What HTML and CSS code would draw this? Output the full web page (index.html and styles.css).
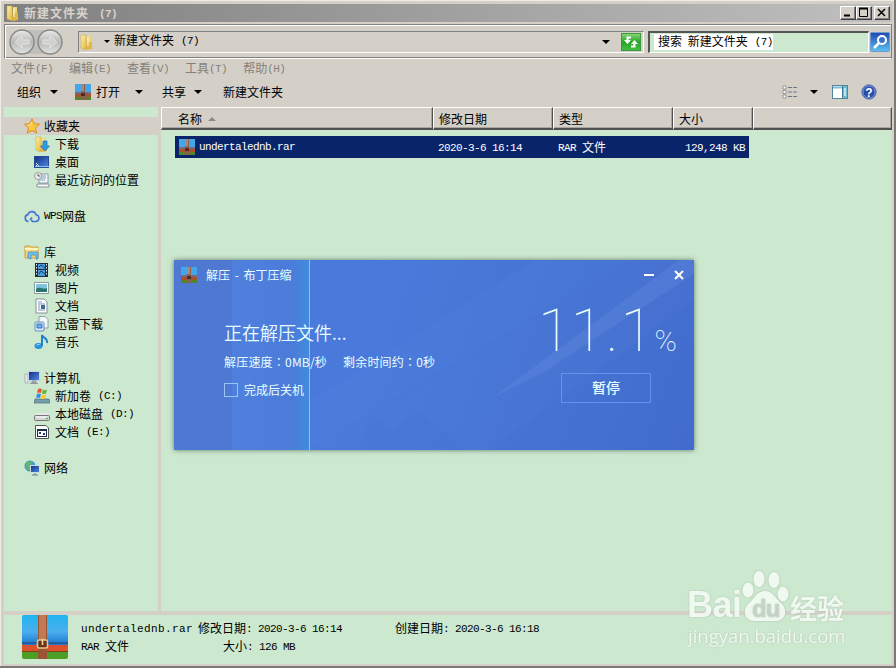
FILE: index.html
```
<!DOCTYPE html>
<html lang="zh-CN">
<head>
    <meta charset="UTF-8">
    <title>新建文件夹 (7)</title>
    <link rel="stylesheet" href="styles.css">
</head>
<body>
    <!-- shared icons -->
    <svg width="0" height="0" class="defs">
        <defs>
            <linearGradient id="gold" x1="0" y1="0" x2="1" y2="1"><stop offset="0" stop-color="#fff3a8"/><stop offset="1" stop-color="#dfae35"/></linearGradient>
            <linearGradient id="sky" x1="0" y1="0" x2="0" y2="1"><stop offset="0" stop-color="#21b4ee"/><stop offset=".55" stop-color="#4aaeee"/><stop offset="1" stop-color="#1b76cc"/></linearGradient>
            <linearGradient id="screen" x1="0" y1="0" x2="1" y2="1"><stop offset="0" stop-color="#102d80"/><stop offset="1" stop-color="#4d8ce2"/></linearGradient>
            <linearGradient id="find" x1="0" y1="0" x2="0" y2="1"><stop offset="0" stop-color="#2347ad"/><stop offset="1" stop-color="#5bc3f2"/></linearGradient>
            <linearGradient id="go" x1="0" y1="0" x2="0" y2="1"><stop offset="0" stop-color="#8ad878"/><stop offset=".5" stop-color="#26a52b"/><stop offset="1" stop-color="#45bd42"/></linearGradient>
            <linearGradient id="round" x1="0" y1="0" x2="0" y2="1"><stop offset="0" stop-color="#e9e9e8"/><stop offset=".5" stop-color="#b9b9b8"/><stop offset="1" stop-color="#e2e2e1"/></linearGradient>
        </defs>
        <symbol id="rar" viewBox="0 0 46 44">
            <rect y="29" width="46" height="15" rx="2" fill="#4c9e26"/>
            <rect y="28" width="46" height="8" fill="#dc512c"/>
            <path d="M0 2q0-2 2-2h42q2 0 2 2v26q0 2-2 2H2q-2 0-2-2z" fill="url(#sky)"/>
            <path d="M0 27h46v2H0z" fill="#225d9d"/><path d="M0 36h46v1H0z" fill="#803f19"/>
            <path d="M16 0h9v44h-9z" fill="#9b5431"/><path d="M17 0h7v25h-7z" fill="#c27a55"/>
            <rect x="15.500" y="25" width="10" height="8" rx="1.500" fill="#6b3317" stroke="#e7c48e" stroke-width="1.600"/>
            <path d="M20.500 24v6" stroke="#efd8aa" stroke-width="1.600"/>
        </symbol>
        <symbol id="rar-small" viewBox="0 0 16 16">
            <path d="M0 0h16v10H0z" fill="#42a6e8"/><path d="M0 8h16v2H0z" fill="#7e6978"/>
            <path d="M0 10h16v3H0z" fill="#a6522e"/><path d="M0 13h16v3H0z" fill="#57842b"/>
            <path d="M6 0h4v16H6z" fill="#8c5f51"/><path d="M6 0h3v7H6z" fill="#b18578"/><path d="M6 9h4v3H6z" fill="#4d2e25"/>
        </symbol>
        <symbol id="folder" viewBox="0 0 16 16">
            <path d="M2 1h5l1 13-1 2-5-2z" fill="url(#gold)" stroke="#c9a43b" stroke-width=".5"/>
            <path d="M8 2h4v12H8z" fill="#f0d573"/><path d="M10 8h3v7l-5 1V9z" fill="#e2b746"/><path d="M9 3v9" stroke="#fffbd9"/>
        </symbol>
    </svg>

    <div class="window">
        <div class="titlebar">
            <svg class="i16"><use href="#folder"/></svg>
            <span class="title">新建文件夹<i>(7)</i></span>
            <div class="winbtns">
                <span><svg width="13" height="11"><path d="M3 8.500h6" stroke="#000" stroke-width="2"/></svg></span>
                <span><svg width="13" height="11"><path d="M2.500 2v7.500h8V2M2 1.500h9" fill="none" stroke="#000"/><path d="M2 1.500h9" stroke="#000" stroke-width="2"/></svg></span>
                <span class="close"><svg width="13" height="11"><path d="M3 2l7 7M10 2l-7 7" stroke="#000" stroke-width="1.500"/></svg></span>
            </div>
        </div>

        <div class="navbar">
            <svg class="backfwd" width="56" height="28">
                <path d="M14 2h28v24H14z" fill="#c0bfbb"/>
                <circle cx="14" cy="14" r="12" fill="url(#round)" stroke="#888" stroke-width="1.400"/>
                <circle cx="42" cy="14" r="12" fill="url(#round)" stroke="#888" stroke-width="1.400"/>
                <path d="M21 12h-7V8l-7 6 7 6v-4h7zM35 12h7V8l7 6-7 6v-4h-7z" fill="#d0d0cf" stroke="#e4e4e3"/>
            </svg>
            <div class="address">
                <svg class="i16"><use href="#folder"/></svg>
                <b class="arrow small"></b>
                <span>新建文件夹<i>(7)</i></span>
                <b class="arrow"></b>
                <svg class="go" width="20" height="18"><rect x=".5" y=".5" width="19" height="17" fill="url(#go)" stroke="#3b9a3c"/><path d="M10 3.500H5.500V7H3l3.500 4L10 7H7.700V5.500H10zM10 14.500h4.500V11H17l-3.500-4L10 11h2.300v1.500H10z" fill="#fff"/></svg>
            </div>
            <div class="search"><span>搜索 新建文件夹<i>(7)</i></span></div>
            <svg class="find" width="20" height="20"><rect x=".5" y=".5" width="19" height="19" rx="1" fill="url(#find)" stroke="#6d9bd0"/><circle cx="12" cy="8" r="4" fill="#3872ca" stroke="#fff" stroke-width="2"/><path d="M9 11l-5 5" stroke="#fff" stroke-width="2.500"/></svg>
        </div>

        <div class="menubar">
            <span>文件<i>(F)</i></span><span>编辑<i>(E)</i></span><span>查看<i>(V)</i></span><span>工具<i>(T)</i></span><span>帮助<i>(H)</i></span>
        </div>

        <div class="toolbar">
            <span>组织</span><b class="arrow a1"></b>
            <svg class="i16"><use href="#rar-small"/></svg><span class="open">打开</span><b class="arrow a2"></b>
            <span>共享</span><b class="arrow a3"></b>
            <span>新建文件夹</span>
            <svg class="views" width="16" height="14"><path d="M1 1h3v3H1zM1 5.500h3v3H1zM1 10h3v3H1z" fill="#fff" stroke="#777" stroke-width=".7"/><path d="M6 2.500h9M6 7h9M6 11.500h9" stroke="#6d7686" stroke-dasharray="4 1"/></svg>
            <b class="arrow a4"></b>
            <svg class="pane" width="17" height="15"><rect x=".5" y=".5" width="15" height="13" fill="#fff" stroke="#4f879c"/><path d="M1 2.500h9" stroke="#7ebdd0" stroke-width="2"/><path d="M10 1h5v12h-5z" fill="#6fb8cd"/><path d="M10.500 1v12" stroke="#407b91"/><path d="M12 3h2v8h-2z" fill="#bbe6ef"/></svg>
            <svg class="help" width="16" height="16"><circle cx="8" cy="8" r="7.300" fill="#2c4da7" stroke="#7b8cbd"/><circle cx="8" cy="8" r="6" fill="none" stroke="#7695df"/><text x="8" y="12.500" text-anchor="middle">?</text></svg>
        </div>

        <div class="main">
            <div class="sidebar">
                <div class="item head current"><svg class="i16" viewBox="0 0 16 16"><path d="M8 .8l2.200 4.900 5.300.5-4 3.600 1.200 5.400L8 12.400l-4.700 2.800 1.200-5.400-4-3.600 5.300-.5z" fill="#fbc83d" stroke="#db8d28"/><path d="M8 3.500L6.500 7 4 7.500" stroke="#fff1a1" fill="none"/></svg>收藏夹</div>
                <div class="item"><svg class="i16" viewBox="0 0 16 16"><use href="#folder"/><path d="M9 5h4v5h2.500L11 15 6.500 10H9z" fill="#2e9ee0" stroke="#1770af" stroke-width=".7"/></svg>下载</div>
                <div class="item"><svg class="i16" viewBox="0 0 16 16"><rect x=".5" y="2.500" width="14" height="11" fill="url(#screen)" stroke="#284b96"/><path d="M1 12h14v1H1z" fill="#8bc1eb"/><path d="M2 9l3 3M2 12l2-2" stroke="#ccecff"/></svg>桌面</div>
                <div class="item gap"><svg class="i16" viewBox="0 0 16 16"><path d="M5 2h9v9H5z" fill="#f8fafa" stroke="#8497a3"/><path d="M6 4h6M6 6h6M6 8h5" stroke="#71a0c2"/><circle cx="4" cy="4" r="3.500" fill="#eee" stroke="#9b9b9b"/><path d="M4 2v2h2" fill="none" stroke="#555"/><path d="M3 12h12v3H3z" fill="#f7f7f7" stroke="#8593a0"/></svg>最近访问的位置</div>
                <div class="item head gap"><svg class="i16" viewBox="0 0 16 16"><path d="M4.500 13.500a3.500 3.500 0 0 1-.6-6.900A4.200 4.200 0 0 1 12 6.800a3.400 3.400 0 0 1 .2 6.700H8.500L6.500 11l1.700-1.500" fill="none" stroke="#4673da" stroke-width="1.600"/></svg><i>WPS</i>网盘</div>
                <div class="item head"><svg class="i16" viewBox="0 0 16 16"><path d="M1 2h5l1 1h7v11H1z" fill="#f0d477" stroke="#c6a24b"/><path d="M1 5h13" stroke="#fff5bd" stroke-width="2"/><path d="M4 14V9q0-1 1-1h8q1 0 1 1v6h-2v-4H7v4z" fill="#72c0ec" stroke="#3c8ac0" stroke-width=".7"/></svg>库</div>
                <div class="item"><svg class="i16" viewBox="0 0 16 16"><path d="M1 1h13v14H1z" fill="#252c35"/><path d="M4 2h7v5H4zM4 8h7v6H4z" fill="#4d9ade"/><path d="M5 5l2-2 4 3M5 12l2-3 4 3" stroke="#123f68" fill="none"/><path d="M2.500 2v12M12.500 2v12" stroke="#dce6ea" stroke-dasharray="1.500 1.500"/></svg>视频</div>
                <div class="item"><svg class="i16" viewBox="0 0 16 16"><path d="M.5 2.500h14v11H.5z" fill="#fff" stroke="#8a9a9f"/><path d="M2 4h11v8H2z" fill="#7fc3e1"/><path d="M2 9c4-3 7 1 11-1v4H2z" fill="#28776f"/></svg>图片</div>
                <div class="item"><svg class="i16" viewBox="0 0 16 16"><path d="M2 1h8l3 3v11H2z" fill="#fff" stroke="#87929b"/><path d="M4 4h4M4 6h7M4 8h2M4 10h2M4 12h7" stroke="#7798b5"/><path d="M7 7h4v4H7z" fill="#3e6b96"/></svg>文档</div>
                <div class="item"><svg class="i16" viewBox="0 0 16 16"><path d="M5 .5h6l3 3V12H5z" fill="#f3f9fb" stroke="#92a0a6"/><rect x="1" y="6" width="9" height="9" rx="1" fill="#d7eafd" stroke="#698ebd"/><path d="M3 8h5v4H3z" fill="#71aced" stroke="#3b78c0"/></svg>迅雷下载</div>
                <div class="item gap"><svg class="i16" viewBox="0 0 16 16"><ellipse cx="4.500" cy="12" rx="4" ry="3" fill="#2794dc"/><path d="M8 12V1c1 3 6 3 5 8" fill="none" stroke="#2282ca" stroke-width="2"/><path d="M2.500 11.500q1-1.500 3-1" stroke="#a4e3ff" fill="none"/></svg>音乐</div>
                <div class="item head"><svg class="i16" viewBox="0 0 16 16"><path d="M1 4h3v9H1z" fill="#e4e8ed" stroke="#8994a6" stroke-width=".6"/><rect x="4.500" y="1.500" width="11" height="9" fill="url(#screen)" stroke="#c8d0e6"/><path d="M8 11h4v2H8zM6 13.500h8" fill="#aaa" stroke="#8e98a5"/></svg>计算机</div>
                <div class="item"><svg class="i16" viewBox="0 0 16 16"><path d="M1 11h14l1 4H0z" fill="#779ead" stroke="#506c76" stroke-width=".7"/><path d="M4 1q2-1 4 0L7 5q-2-1-4 0z" fill="#ed572e"/><path d="M9 1.500q2 1 4 0l-1 4q-2 1-4 0z" fill="#64b837"/><path d="M3 6q2-1 4 0l-1 4q-2-1-4 0z" fill="#378ce2"/><path d="M8 6.500q2 1 4 0l-1 4q-2 1-4 0z" fill="#f6c92c"/></svg>新加卷<i>(C:)</i></div>
                <div class="item"><svg class="i16" viewBox="0 0 16 16"><path d="M2 7h12l1.500 3H.5z" fill="#e7e7e7"/><rect x=".5" y="9.500" width="15" height="5" rx="1" fill="#d3d5d5" stroke="#777"/><path d="M2 11h11" stroke="#fff"/><path d="M12 12.500h2" stroke="#54a95d"/></svg>本地磁盘<i>(D:)</i></div>
                <div class="item gap"><svg class="i16" viewBox="0 0 16 16"><path d="M1.500 1.500H12l2.500 2.500v10.500h-13z" fill="#fff" stroke="#555"/><path d="M3 5h10v8H3z" fill="#1d2b48"/><path d="M4 7h8v5H4z" fill="#fff"/><path d="M5 8h2v2H5zM9 9h2v2H9z" fill="#243f8a"/></svg>文档<i>(E:)</i></div>
                <div class="item head"><svg class="i16" viewBox="0 0 16 16"><circle cx="6" cy="6" r="5.500" fill="#3c9bd8"/><path d="M2 3q4-3 7-1L6 5l1 4-3 2-2-4z" fill="#62b66a"/><rect x="6.500" y="5.500" width="9" height="7" fill="url(#screen)" stroke="#d1dbe8"/><path d="M11 13v2M8 15h6" stroke="#687b94"/></svg>网络</div>
            </div>

            <div class="files">
                <div class="columns">
                    <div>名称<b class="sort"></b></div><div>修改日期</div><div>类型</div><div>大小</div><div></div>
                </div>
                <div class="row">
                    <div><svg class="i16"><use href="#rar-small"/></svg><i>undertalednb.rar</i></div>
                    <div><i>2020-3-6 16:14</i></div>
                    <div><i>RAR </i>文件</div>
                    <div class="size"><i>129,248 KB</i></div>
                </div>
            </div>
        </div>

        <div class="details">
            <svg width="46" height="44"><use href="#rar"/></svg>
            <div class="meta">
                <div><i class="name">undertalednb.rar</i>修改日期<i>: 2020-3-6 16:14</i></div>
                <div><i>RAR </i>文件<span class="filesize">大小<i>: 126 MB</i></span></div>
            </div>
            <div class="created">创建日期<i>: 2020-3-6 16:18</i></div>
        </div>
    </div>

    <div class="dialog">
        <svg class="rays" width="520" height="190">
            <path d="M460 0L135 190h180L520 40V0z" fill="#6f97e8" opacity=".06"/>
            <path d="M360 0h100L200 150 135 190H60z" fill="#6592eb" opacity=".1"/>
            <path d="M520 0v14L370 112 318 138 505 0z" fill="#91b1ef" opacity=".13"/>
            <path d="M185 190l10-35 23 15 27-20 45 40z" fill="#315cc1" opacity=".05"/>
        </svg>
        <div class="done"></div>
        <div class="dialog-title">
            <svg class="i16"><use href="#rar-small"/></svg><span>解压 - 布丁压缩</span>
            <svg class="dialog-btns" width="42" height="12"><path d="M0 6h10M31 2l8 8M39 2l-8 8" stroke="#fff" stroke-width="2"/></svg>
        </div>
        <div class="dialog-body">
            <div class="status">
                <h1>正在解压文件...</h1>
                <p><span>解压速度<em lang="zh-TW">：</em>0MB/秒</span><span>剩余时间约<em lang="zh-TW">：</em>0秒</span></p>
                <label><b class="check"></b>完成后关机</label>
            </div>
            <div class="progress">
                <div class="percent">11<span>.</span>1<small>%</small></div>
                <div class="pause">暂停</div>
            </div>
        </div>
    </div>

    <div class="watermark">
        <div class="logo">
            <span class="bai">Bai</span>
            <svg width="48" height="52"><ellipse cx="7" cy="20" rx="5.500" ry="7.500"/><ellipse cx="18" cy="9" rx="5.500" ry="8"/><ellipse cx="33" cy="10" rx="5.500" ry="8"/><ellipse cx="42" cy="24" rx="5.500" ry="7.500"/><path d="M24 21c8 0 10 7 16 12 7 6 5 18-5 18H13C3 51 1 39 8 33c6-5 8-12 16-12z"/><text x="11" y="47">du</text></svg>
            <span class="jy">经验</span>
        </div>
        <div class="site">jingyan.baidu.com</div>
    </div>
</body>
</html>
```
FILE: styles.css
```
* {
    box-sizing: border-box;
}

body {
    margin: 0;
    width: 896px;
    height: 668px;
    overflow: hidden;
    position: relative;
    background: #7c7a78;
    font: 12px/18px "Noto Sans CJK SC", sans-serif;
    word-spacing: 3px;
    color: #000;
    white-space: nowrap;
}

svg {
    display: block;
    flex: none;
}

.defs {
    position: absolute;
}

/* latin text takes half the width of a chinese character */
i {
    font: 11px/1 "Liberation Mono", monospace;
    letter-spacing: -0.6px;
    word-spacing: 0;
    vertical-align: 1px;
    white-space: pre;
}

.i16 {
    width: 16px;
    height: 16px;
}

.window {
    width: 894px;
    height: 666px;
    padding: 3px 2px 2px 3px;
    background: #d4d0c8;
    border-left: 1px solid #eeece5;
    border-top: 1px solid #eeece5;
    display: flex;
    flex-direction: column;
}

.titlebar {
    height: 18px;
    flex: none;
    display: flex;
    align-items: center;
    padding: 0 2px 0 1px;
    background: linear-gradient(90deg, #808080, #c0c0c0);
    color: #d8d4cc;
}

.title {
    margin-left: 3px;
    font-weight: bold;
    letter-spacing: 1px;
}

.title i {
    margin-left: 10px;
    font-weight: bold;
}

.winbtns {
    margin-left: auto;
    display: flex;
}

.winbtns span {
    width: 16px;
    height: 14px;
    background: #d4d0c8;
    border: 1px solid;
    border-color: #fff #404040 #404040 #fff;
    box-shadow: inset -1px -1px #808080;
}

.winbtns .close {
    margin-left: 2px;
}

.arrow {
    flex: none;
    width: 0;
    height: 0;
    border: 4px solid transparent;
    border-top-color: #000;
    border-bottom: 0;
}

.arrow.small {
    border-width: 3px 3px 0;
}

.navbar {
    height: 35px;
    flex: none;
    margin-top: 2px;
    border: 1px solid #808080;
    border-bottom-color: #fff;
    box-shadow: inset 1px 1px #fff, inset 0 -1px #808080;
    display: flex;
    align-items: center;
    padding-left: 3px;
}

.address {
    width: 566px;
    height: 22px;
    margin-left: 14px;
    border: 1px solid #808080;
    border-right-color: #fff;
    border-bottom-color: #fff;
    display: flex;
    align-items: center;
    line-height: 16px;
}

.address span {
    margin-bottom: 3px;
}

.address .small {
    margin: 0 4px 0 9px;
}

.address i,
.search i {
    margin-left: 7px;
}

.address > .arrow:not(.small) {
    margin-left: auto;
}

.go {
    margin: 0 2px 0 11px;
}

.search {
    width: 221px;
    height: 22px;
    margin-left: 4px;
    padding: 1px 4px;
    border: 1px solid #fff;
    border-top: 2px solid #555;
    border-left: 2px solid #555;
    background: #cce8cf;
}

.search span {
    display: block;
    width: 119px;
    height: 16px;
    padding-left: 4px;
    line-height: 14px;
    background: #fff;
}

.find {
    margin-left: 1px;
}

.menubar {
    height: 18px;
    flex: none;
    display: flex;
    gap: 16px;
    padding-left: 7px;
    color: #858178;
    line-height: 17px;
}

.toolbar {
    height: 30px;
    flex: none;
    display: flex;
    align-items: center;
    padding: 0 0 0 13px;
}

.a1 {
    margin: 0 17px 0 9px;
}

.open {
    margin-left: 5px;
}

.a2 {
    margin: 0 19px 0 15px;
}

.a3 {
    margin: 0 21px 0 8px;
}

.views {
    margin-left: auto;
}

.a4 {
    margin: 0 14px 0 12px;
}

.help {
    margin: 0 15px 0 12px;
}

.help text {
    font: bold 12px "Liberation Sans", sans-serif;
    fill: #fff;
}

.main {
    height: 504px;
    flex: none;
    display: flex;
}

.sidebar {
    width: 157px;
    flex: none;
    margin-right: 1px;
    padding-top: 10px;
    background: #cce8cf;
    border-right: 3px solid #d4d0c8;
}

.item {
    height: 18px;
    display: flex;
    align-items: center;
    padding-left: 30px;
}

.item svg {
    margin-right: 5px;
}

.item.head {
    padding-left: 20px;
}

.item.head svg {
    margin-right: 4px;
}

.item.gap {
    margin-bottom: 18px;
}

.item.current {
    background: #d4d0c8;
}

.item:not(.head) i {
    margin-left: 7px;
}

.files {
    flex: 1;
    margin-left: -1px;
    background: #cce8cf;
}

.columns {
    height: 23px;
    display: grid;
    grid-template-columns: 272px 120px 120px 80px 1fr;
}

.columns div {
    display: flex;
    align-items: center;
    padding: 2px 0 0 5px;
    background: #d4d0c8;
    border: 1px solid;
    border-color: #fff #505050 #505050 #fff;
    border-width: 1px 1px 2px;
    box-shadow: inset -1px -1px #aaa69e;
}

.columns div:first-child {
    padding-left: 16px;
}

.sort {
    margin-left: 6px;
    border: 4px solid transparent;
    border-top: 0;
    border-bottom-color: #8c8a83;
}

.row {
    width: 574px;
    height: 22px;
    margin: 6px 0 0 14px;
    display: grid;
    grid-template-columns: 263px 120px 120px 1fr;
    align-items: center;
    background: #0a246a;
    color: #fff;
}

.row div {
    line-height: 16px;
}

.row div:first-child {
    display: flex;
    align-items: center;
    padding-left: 4px;
}

.row div:first-child svg {
    margin-right: 4px;
}

.row .size {
    padding-right: 4px;
    text-align: right;
}

.details {
    flex: 1;
    display: flex;
    margin-top: 4px;
    padding-left: 18px;
    background: #cce8cf;
}

.meta {
    width: 300px;
    margin-left: 13px;
    padding-top: 4px;
}

.meta .name {
    margin-right: 5px;
    letter-spacing: 0.4px;
}

.filesize {
    margin-left: 94px;
}

.created {
    margin-left: 14px;
    padding-top: 4px;
}

/* extraction window floating above the explorer */
.dialog {
    position: absolute;
    left: 174px;
    top: 260px;
    width: 520px;
    height: 190px;
    background: linear-gradient(110deg, #4b7bdd, #4979da 40%, #4673d3 70%, #416ccd);
    color: #eaffff;
    box-shadow: 0 0 5px rgba(55, 85, 65, .75);
}

.rays,
.done {
    position: absolute;
    left: 0;
    top: 0;
}

.done {
    width: 136px;
    height: 190px;
    border-right: 1px solid #80c7f6;
    background: linear-gradient(90deg, #4e78d1 58px, #5080dd 58px, #4b7cda 118px, #428bdc);
}

.dialog-title,
.dialog-body {
    position: relative;
    display: flex;
}

.dialog-title {
    height: 30px;
    align-items: center;
    padding: 0 8px 0 7px;
}

.dialog-title span {
    margin-left: 9px;
    word-spacing: 2px;
}

.dialog-btns {
    margin-left: auto;
}

.dialog-body {
    padding-left: 50px;
}

.status {
    width: 310px;
    padding-top: 30px;
}

.status h1 {
    margin: 0;
    font-size: 18px;
    line-height: 24px;
    font-weight: 350;
}

.status p {
    display: flex;
    gap: 16px;
    margin: 9px 0 10px;
    letter-spacing: 0.2px;
}

.status em {
    font-family: "Noto Sans CJK TC", sans-serif;
    font-style: normal;
}

.status label {
    display: flex;
    align-items: center;
}

.check {
    width: 14px;
    height: 14px;
    margin-right: 6px;
    border: 1px solid #9bc5f4;
}

.percent {
    height: 83px;
    padding: 10px 0 0 4px;
    font: 100 60px/62px Roboto, sans-serif;
}

.percent span {
    margin: 0 2px;
}

.percent small {
    margin-left: 1px;
    font-size: 30px;
}

.pause {
    width: 90px;
    height: 30px;
    margin-left: 27px;
    border: 1px solid #6792e7;
    font-size: 14px;
    font-weight: 500;
    line-height: 27px;
    text-align: center;
}

.watermark {
    position: absolute;
    left: 687px;
    top: 572px;
    color: #f4fbf4;
    text-shadow: 0 0 2px #a8b9aa;
    opacity: .9;
}

.logo {
    display: flex;
    align-items: flex-end;
    height: 50px;
}

.bai {
    width: 54px;
    font: bold 36px/42px "Liberation Sans", sans-serif;
    letter-spacing: -0.5px;
    height: 38px;
}

.logo svg {
    fill: #f4fbf4;
    filter: drop-shadow(0 0 1px #a8b9aa);
}

.logo text {
    font: bold 24px "Liberation Sans", sans-serif;
    letter-spacing: -1px;
    fill: #c3d3c5;
}

.jy {
    margin-left: 1px;
    font-size: 27px;
    font-weight: 700;
    line-height: 29px;
}

.site {
    margin: 2px 0 0 1px;
    font: 18.5px/24px "Open Sans", sans-serif;
}
```
